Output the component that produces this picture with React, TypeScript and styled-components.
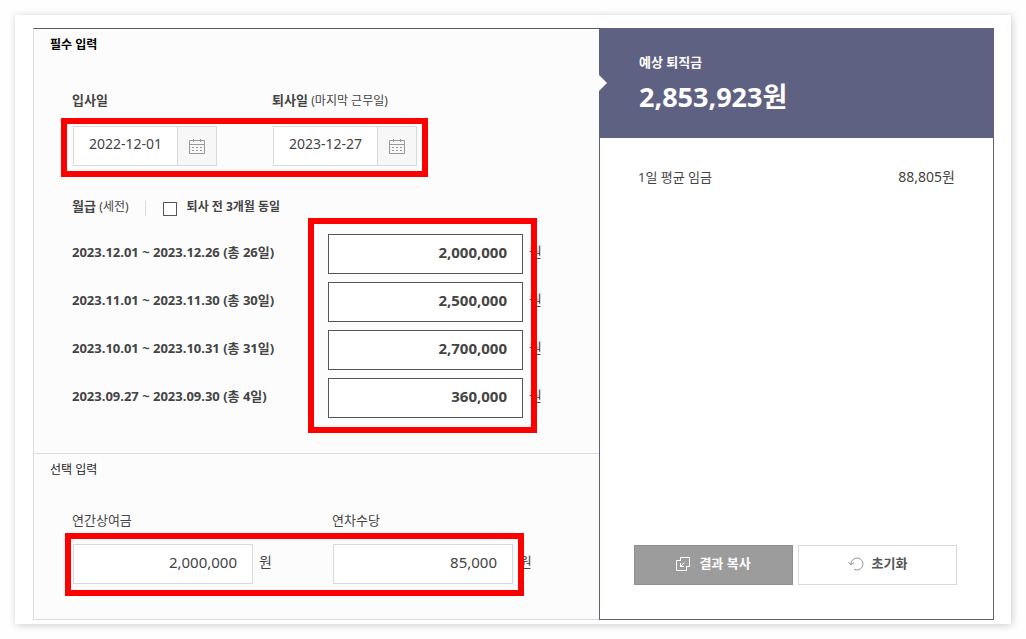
import React, { useState } from "react";
import styled, { createGlobalStyle, css } from "styled-components";

const GlobalStyle = createGlobalStyle`
  *, *::before, *::after { box-sizing: border-box; }
  body {
    margin: 0;
    background: #fefefe;
    color: #444;
    font-family: "Noto Sans", "Noto Sans CJK KR", sans-serif;
    font-size: 14px;
    line-height: 20px;
  }
  button, input { font: inherit; color: inherit; margin: 0; }
`;

const Card = styled.main`
  margin: 15px;
  padding: 13px 17px 4px 18px;
  background: #fff;
  box-shadow: 1px 1px 8px rgba(0, 0, 0, 0.2);
`;

const Calculator = styled.div`
  display: grid;
  grid-template-columns: minmax(566px, 1fr) 395px;
`;

const Form = styled.form`
  background: #fcfcfc;
  border-top: 1px solid #5c5c60;
  border-left: 1px solid #dcdcdc;
  border-bottom: 1px solid #dcdcdc;
`;

const Section = styled.section<{ $divided?: boolean }>`
  padding: 6px 16px 35px;
  ${(p) => p.$divided && css`border-bottom: 1px solid #dcdcdc;`}
`;

const SectionTitle = styled.h2<{ $strong?: boolean }>`
  margin: 0;
  font-size: 12px;
  line-height: 20px;
  font-weight: ${(p) => (p.$strong ? 700 : 400)};
  color: ${(p) => (p.$strong ? "#000" : "#222")};
`;

const SectionBody = styled.div`
  padding-left: 22px;
`;

const Label = styled.label<{ $strong?: boolean }>`
  font-size: 13px;
  line-height: 20px;
  font-weight: ${(p) => (p.$strong ? 700 : 400)};
`;

const Note = styled.span`
  font-size: 12px;
  font-weight: 400;
`;

const Marked = styled.div`
  position: relative;
  width: max-content;
`;

const Mark = styled.span<{ $inset: string }>`
  position: absolute;
  inset: ${(p) => p.$inset};
  border: 6px solid #fe0000;
  pointer-events: none;
`;

const DateLabels = styled.div`
  display: grid;
  grid-template-columns: 144px max-content;
  gap: 56px;
  margin: 35px 0 15px;
`;

const DateRow = styled(Marked)`
  display: flex;
  gap: 56px;
  margin-left: 1px;
`;

const DateBox = styled.div`
  display: flex;
  width: 144px;
  height: 40px;
  border: 1px solid #d9d9d9;
  background: #fff;
`;

const DateInput = styled.input`
  flex: 1;
  min-width: 0;
  padding: 0 0 4px 15px;
  border: 0;
  background: transparent;
`;

const CalendarButton = styled.button`
  display: grid;
  place-items: center;
  width: 39px;
  padding: 0;
  border: 0;
  border-left: 1px solid #d9d9d9;
  background: #f7f7f7;
`;

const SalaryHead = styled.div`
  display: flex;
  align-items: center;
  margin-top: 30px;
`;

const SameCheck = styled.div`
  display: flex;
  align-items: center;
  gap: 10px;
  margin-left: 16px;
  padding-left: 18px;
  background: linear-gradient(#dcdcdc, #dcdcdc) left 4px / 1px 15px no-repeat;
`;

const Checkbox = styled.input`
  appearance: none;
  width: 14px;
  height: 14px;
  margin-top: 4px;
  border: 1px solid #555;
  background: #fff;
  &:checked { background: #5f6183; }
`;

const CheckLabel = styled.label`
  font-size: 12px;
  line-height: 20px;
  font-weight: 700;
`;

const SalaryGrid = styled.div`
  display: grid;
  grid-template-columns: 256px max-content;
  margin-top: 17px;
`;

const Stack = styled.div`
  display: grid;
  gap: 8px;
`;

const Period = styled.label`
  height: 40px;
  font-size: 13px;
  line-height: 36px;
  font-weight: 700;
`;

const AmountRow = styled.div`
  display: flex;
  gap: 6px;
`;

const AmountInput = styled.input<{ $strong?: boolean }>`
  width: ${(p) => (p.$strong ? 195 : 180)}px;
  height: 40px;
  padding: 0 15px 4px;
  border: 1px solid ${(p) => (p.$strong ? "#555" : "#d9d9d9")};
  background: #fff;
  text-align: right;
  font-size: 15px;
  font-weight: ${(p) => (p.$strong ? 700 : 400)};
`;

const Unit = styled.span`
  width: 14px;
  line-height: 36px;
`;

const BonusLabels = styled.div`
  display: grid;
  grid-template-columns: 200px max-content;
  gap: 60px;
  margin: 30px 0 14px;
`;

const BonusRow = styled(Marked)`
  display: flex;
  gap: 60px;
  margin-left: 1px;
`;

const Result = styled.aside`
  display: flex;
  flex-direction: column;
  border: 1px solid #5e6172;
  border-top: 0;
  background: #fff;
`;

const ResultHead = styled.header`
  position: relative;
  height: 110px;
  margin: 0 -1px;
  padding: 24px 40px 0;
  background: #5f6183;
  color: #fff;
  font-weight: 700;

  &::before {
    content: "";
    position: absolute;
    left: 0;
    top: 47px;
    border: 8px solid transparent;
    border-left-color: #fcfcfc;
    border-right-width: 0;
  }
`;

const ResultTitle = styled.h2`
  margin: 0;
  font-size: 13px;
  line-height: 20px;
`;

const Total = styled.p`
  margin: 7px 0 0;
  font-size: 27px;
  line-height: 36px;
`;

const Average = styled.dl`
  display: flex;
  justify-content: space-between;
  margin: 29px 38px 0;
  dt { font-size: 13px; }
  dd { margin: 0; }
`;

const Actions = styled.div`
  display: grid;
  grid-template-columns: 1fr 1fr;
  gap: 5px;
  margin: auto 36px 34px 34px;
`;

const Action = styled.button<{ $filled?: boolean }>`
  display: flex;
  align-items: center;
  justify-content: center;
  gap: 8px;
  height: 40px;
  padding: 0 0 4px;
  border: 1px solid ${(p) => (p.$filled ? "#8f8f8f" : "#d9d9d9")};
  background: ${(p) => (p.$filled ? "#9c9c9c" : "#fff")};
  color: ${(p) => (p.$filled ? "#fff" : "#555")};
  font-size: 13px;
  font-weight: 700;

  svg { margin-top: 2px; }
`;

const CalendarIcon = () => (
  <svg width="16" height="15" viewBox="0 0 16 15" fill="none" stroke="#999" aria-hidden="true">
    <path d="M.5 1.500h15v13H.5zM.5 5.500h15M4.500 0v3M11.500 0v3" />
    <path d="M3 8.500h2M7 8.500h2M11 8.500h2M3 11.500h2M7 11.500h2M11 11.500h2" />
  </svg>
);

const CopyIcon = () => (
  <svg width="15" height="14" viewBox="0 0 15 14" fill="none" stroke="#fff" aria-hidden="true">
    <path d="M4.500 3.500v-3h9v9h-3M5 3.500H.5v10h10v-4.500" />
    <path d="M8.500 5.500l-4 4M4.500 6v3.500h3.500" />
  </svg>
);

const ResetIcon = () => (
  <svg width="16" height="14" viewBox="0 0 16 14" fill="none" stroke="#888" strokeWidth="0.9" aria-hidden="true">
    <path d="M3 7.500a6 6 0 1 1 3 4.700" />
    <path d="M.5 5l2.500 3 3-2.500" />
  </svg>
);

const periods = [
  { id: "m1", label: "2023.12.01 ~ 2023.12.26 (총 26일)", amount: "2,000,000" },
  { id: "m2", label: "2023.11.01 ~ 2023.11.30 (총 30일)", amount: "2,500,000" },
  { id: "m3", label: "2023.10.01 ~ 2023.10.31 (총 31일)", amount: "2,700,000" },
  { id: "m4", label: "2023.09.27 ~ 2023.09.30 (총 4일)", amount: "360,000" },
];

const DateField = ({ id, value }: { id: string; value: string }) => (
  <DateBox>
    <DateInput id={id} defaultValue={value} />
    <CalendarButton type="button" aria-label="달력">
      <CalendarIcon />
    </CalendarButton>
  </DateBox>
);

const AmountField = ({ id, value, strong }: { id: string; value: string; strong?: boolean }) => (
  <AmountRow>
    <AmountInput id={id} defaultValue={value} $strong={strong} inputMode="numeric" />
    <Unit>원</Unit>
  </AmountRow>
);

export default function App() {
  const [same, setSame] = useState(false);
  return (
    <>
      <GlobalStyle />
      <Card>
        <Calculator>
          <Form>
            <Section $divided>
              <SectionTitle $strong>필수 입력</SectionTitle>
              <SectionBody>
                <DateLabels>
                  <Label htmlFor="start" $strong>입사일</Label>
                  <Label htmlFor="end" $strong>
                    퇴사일 <Note>(마지막 근무일)</Note>
                  </Label>
                </DateLabels>
                <DateRow>
                  <DateField id="start" value="2022-12-01" />
                  <DateField id="end" value="2023-12-27" />
                  <Mark $inset="-8px -11px -11px -12px" />
                </DateRow>
                <SalaryHead>
                  <Label as="span" $strong>
                    월급 <Note>(세전)</Note>
                  </Label>
                  <SameCheck>
                    <Checkbox id="same" type="checkbox" checked={same} onChange={() => setSame(!same)} />
                    <CheckLabel htmlFor="same">퇴사 전 3개월 동일</CheckLabel>
                  </SameCheck>
                </SalaryHead>
                <SalaryGrid>
                  <Stack>
                    {periods.map((p) => (
                      <Period key={p.id} htmlFor={p.id}>{p.label}</Period>
                    ))}
                  </Stack>
                  <Marked>
                    <Stack>
                      {periods.map((p) => (
                        <AmountField key={p.id} id={p.id} value={p.amount} strong />
                      ))}
                    </Stack>
                    <Mark $inset="-16px 6px -15px -20px" />
                  </Marked>
                </SalaryGrid>
              </SectionBody>
            </Section>
            <Section>
              <SectionTitle>선택 입력</SectionTitle>
              <SectionBody>
                <BonusLabels>
                  <Label htmlFor="bonus">연간상여금</Label>
                  <Label htmlFor="leave">연차수당</Label>
                </BonusLabels>
                <BonusRow>
                  <AmountField id="bonus" value="2,000,000" />
                  <AmountField id="leave" value="85,000" />
                  <Mark $inset="-11px 9px -12px -8px" />
                </BonusRow>
              </SectionBody>
            </Section>
          </Form>
          <Result>
            <ResultHead>
              <ResultTitle>예상 퇴직금</ResultTitle>
              <Total>2,853,923원</Total>
            </ResultHead>
            <Average>
              <dt>1일 평균 임금</dt>
              <dd>88,805원</dd>
            </Average>
            <Actions>
              <Action type="button" $filled>
                <CopyIcon />
                결과 복사
              </Action>
              <Action type="button">
                <ResetIcon />
                초기화
              </Action>
            </Actions>
          </Result>
        </Calculator>
      </Card>
    </>
  );
}
